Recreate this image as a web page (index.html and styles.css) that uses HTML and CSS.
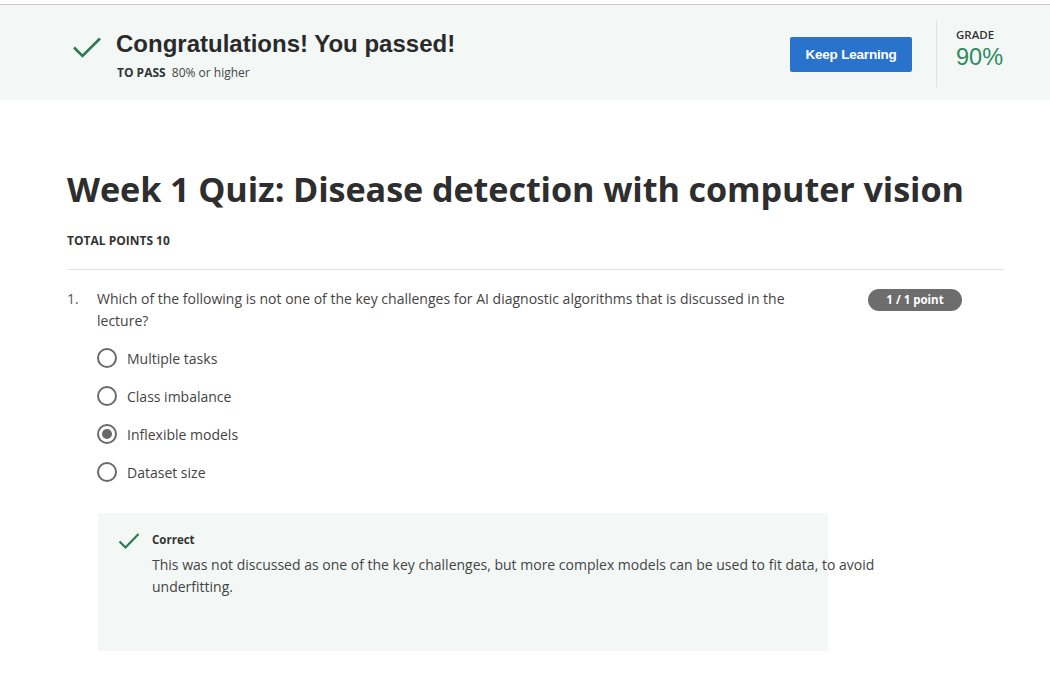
FILE: index.html
```html
<!DOCTYPE html>
<html lang="en">
<head>
<meta charset="utf-8">
<title>Week 1 Quiz</title>
<link rel="stylesheet" href="styles.css">
</head>
<body>
<div class="topline"></div>
<header class="banner">
  <div class="pass">
    <svg class="pass-check" width="30" height="22" viewBox="0 0 30 22"><path d="M2 11.5 L10.5 20 L28 2.5" fill="none" stroke="#2a7a55" stroke-width="2.6"/></svg>
    <div class="pass-text">
      <h2 class="pass-title">Congratulations! You passed!</h2>
      <div class="pass-sub"><b>TO PASS</b> 80% or higher</div>
    </div>
  </div>
  <button class="keep">Keep Learning</button>
  <div class="grade">
    <div class="grade-label">GRADE</div>
    <div class="grade-value">90%</div>
  </div>
</header>
<main class="content">
  <h1 class="title">Week 1 Quiz: Disease detection with computer vision</h1>
  <div class="total">TOTAL POINTS 10</div>
  <hr class="rule">
  <section class="question">
    <div class="qnum">1.</div>
    <div class="qbody">
      <div class="qhead">
        <p class="qtext">Which of the following is not one of the key challenges for AI diagnostic algorithms that is discussed in the lecture?</p>
        <span class="badge">1 / 1 point</span>
      </div>
      <ul class="options">
        <li class="option"><span class="radio"></span>Multiple tasks</li>
        <li class="option"><span class="radio"></span>Class imbalance</li>
        <li class="option"><span class="radio checked"></span>Inflexible models</li>
        <li class="option"><span class="radio"></span>Dataset size</li>
      </ul>
      <div class="feedback">
        <svg class="fb-check" width="22" height="18" viewBox="0 0 22 18"><path d="M1.5 9.5 L7.5 15.5 L20.5 2" fill="none" stroke="#2a7a55" stroke-width="2.2"/></svg>
        <div class="fb-body">
          <div class="fb-title">Correct</div>
          <p class="fb-text">This was not discussed as one of the key challenges, but more complex models can be used to fit data, to avoid underfitting.</p>
        </div>
      </div>
    </div>
  </section>
</main>
</body>
</html>
```
FILE: styles.css
```css
html, body {
  margin: 0;
  padding: 0;
  background: #ffffff;
}
body {
  width: 1050px;
  font-family: "Open Sans", "Liberation Sans", sans-serif;
  color: #333333;
}
.topline {
  height: 4px;
  border-bottom: 1px solid #c8c8c8;
}
.banner {
  height: 95px;
  background: #f3f8f7;
  display: flex;
  align-items: flex-start;
  padding-left: 72px;
  box-sizing: border-box;
}
.pass {
  display: flex;
  align-items: flex-start;
  flex: 1;
  padding-top: 25px;
}
.pass-check {
  margin-top: 6px;
  margin-right: 14px;
  flex-shrink: 0;
}
.pass-title {
  margin: 0;
  font-family: "Liberation Sans", Arial, sans-serif;
  font-weight: 700;
  font-size: 24px;
  line-height: 28px;
  color: #2a2a2a;
}
.pass-sub {
  margin-top: 7px;
  font-size: 12px;
  line-height: 16px;
  color: #444;
  padding-left: 1px;
}
.pass-sub b {
  font-weight: 700;
  color: #333;
  margin-right: 3px;
}
.keep {
  margin-top: 32px;
  width: 122px;
  height: 35px;
  border: none;
  border-radius: 2px;
  background: #2a73cc;
  color: #fff;
  font-family: "Liberation Sans", Arial, sans-serif;
  font-weight: 700;
  font-size: 13.5px;
  letter-spacing: -0.2px;
  padding: 0;
  flex-shrink: 0;
}
.grade {
  margin-left: 24px;
  margin-top: 15px;
  height: 67px;
  width: 114px;
  flex-shrink: 0;
  border-left: 1px solid #dfe3e2;
  padding-left: 19px;
  padding-top: 7px;
  box-sizing: border-box;
}
.grade-label {
  font-size: 11.5px;
  font-weight: 600;
  line-height: 15px;
  color: #333;
}
.grade-value {
  margin-top: 2px;
  font-family: "Liberation Sans", Arial, sans-serif;
  font-size: 23.5px;
  line-height: 26px;
  color: #2e8a5d;
}
.content {
  padding: 0 46px 0 67px;
}
.title {
  margin: 67px 0 0 0;
  font-family: "Open Sans", sans-serif;
  font-weight: 700;
  font-size: 34.2px;
  line-height: 44px;
  color: #2e2e2e;
  letter-spacing: -0.1px;
}
.total {
  margin-top: 22px;
  font-size: 12px;
  font-weight: 700;
  line-height: 16px;
  color: #333;
}
.rule {
  margin: 20px 0 0 0;
  border: none;
  border-top: 1px solid #e2e2e2;
  height: 0;
}
.question {
  display: flex;
  margin-top: 18px;
}
.qnum {
  width: 30px;
  font-size: 14px;
  line-height: 22px;
  color: #555;
}
.qbody {
  flex: 1;
}
.qhead {
  display: flex;
  align-items: flex-start;
}
.qtext {
  margin: 0;
  width: 740px;
  font-size: 14px;
  line-height: 22px;
  color: #444;
}
.badge {
  margin-left: 31px;
  margin-top: 1px;
  width: 94px;
  height: 22px;
  border-radius: 11px;
  background: #6d6d6d;
  color: #fff;
  font-size: 11.5px;
  font-weight: 700;
  line-height: 22px;
  text-align: center;
}
.options {
  list-style: none;
  margin: 7px 0 0 0;
  padding: 0;
}
.option {
  display: flex;
  align-items: center;
  height: 38px;
  font-size: 14px;
  color: #444;
}
.radio {
  width: 20px;
  height: 20px;
  box-sizing: border-box;
  border: 2px solid #6a6a6a;
  border-radius: 50%;
  margin-right: 10px;
  display: flex;
  align-items: center;
  justify-content: center;
  flex-shrink: 0;
}
.radio.checked::after {
  content: "";
  width: 10px;
  height: 10px;
  border-radius: 50%;
  background: #6a6a6a;
}
.feedback {
  margin-top: 22px;
  margin-left: 1px;
  width: 730px;
  height: 138px;
  background: #f3f8f7;
  display: flex;
  align-items: flex-start;
  padding: 19px 0 0 20px;
  box-sizing: border-box;
}
.fb-check {
  margin-right: 12px;
  flex-shrink: 0;
}
.fb-body {
  flex-shrink: 0;
}
.fb-title {
  font-size: 11.5px;
  font-weight: 700;
  line-height: 16px;
  color: #333;
}
.fb-text {
  margin: 6px 0 0 0;
  width: 740px;
  font-size: 14px;
  line-height: 22px;
  color: #444;
}
```
